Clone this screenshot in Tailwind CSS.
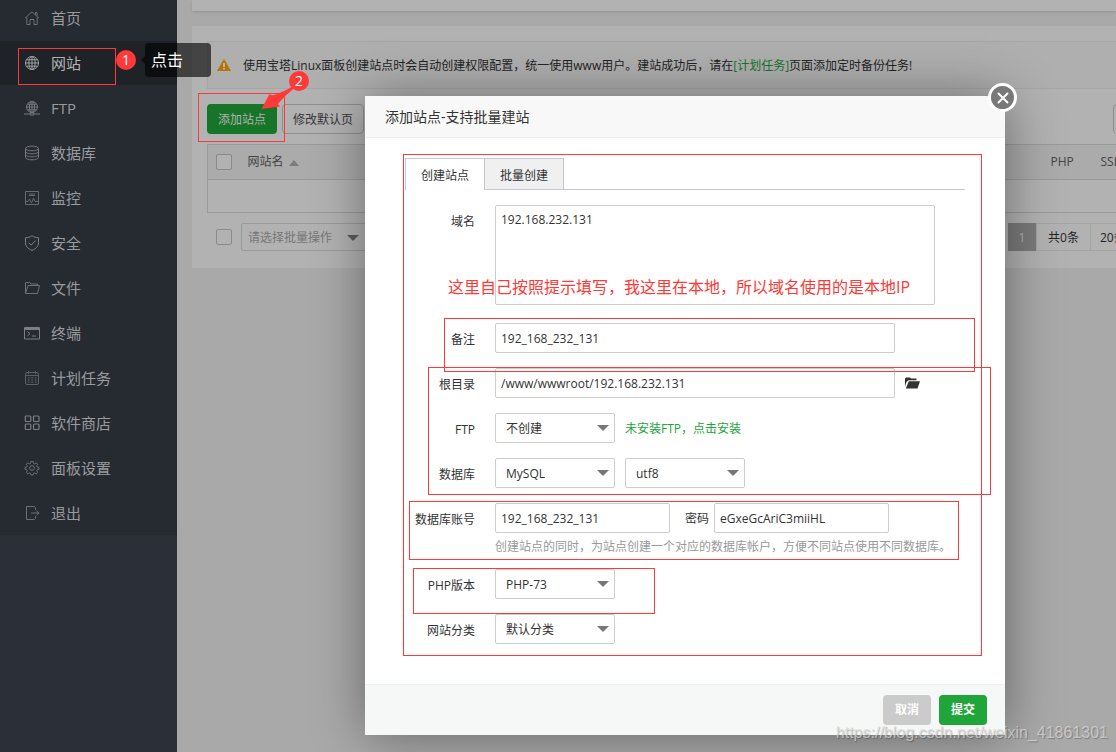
<!DOCTYPE html>
<html lang="zh-CN">
<head>
<meta charset="utf-8">
<meta name="viewport" content="width=device-width, initial-scale=1">
<title>网站</title>
<script src="https://cdn.jsdelivr.net/npm/@tailwindcss/browser@4"></script>
</head>
<body class="relative flex h-screen overflow-hidden bg-[#a9a9a9] font-['Open_Sans','Noto_Sans_CJK_SC',sans-serif] text-xs leading-5 text-[#232323]">

<!-- Sidebar -->
<nav class="w-[177px] shrink-0 overflow-hidden bg-[#2b2f38] text-[15px] text-[#9a9b9d]">
  <ul class="-mt-1 flex flex-col gap-px bg-[#262a31]">
    <li><a href="#" class="flex h-11 items-center gap-[11px] pl-6">
      <svg class="size-4 text-[#6d7074]" viewBox="0 0 16 16" fill="none" stroke="currentColor"><path d="M1 8.2 8 1.8l7 6.4M2.800 7.500V14.500h3.200V9.500h4v5h3.200V7.500M11.500 4.500V2.500h1.500v3.500"/></svg>首页</a></li>
    <li><a href="#" class="flex h-11 items-center gap-[11px] bg-[#1f2226] pl-6 text-[#b2b2b2]">
      <svg class="size-4 text-[#a0a1a2]" viewBox="0 0 16 16" fill="none" stroke="currentColor"><circle cx="8" cy="8" r="6.500"/><ellipse cx="8" cy="8" rx="3.200" ry="6.500"/><path d="M8 1.500v13M1.500 8h13M2.500 4.800h11M2.500 11.200h11"/></svg>网站</a></li>
    <li><a href="#" class="flex h-11 items-center gap-[11px] pl-6">
      <svg class="size-4 text-[#76797d]" viewBox="0 0 16 16" fill="none" stroke="currentColor"><circle cx="8" cy="7" r="5.500"/><ellipse cx="8" cy="7" rx="2.600" ry="5.500"/><path d="M8 1.500v11M2.500 7h11M3.500 4.300h9M3.500 9.800h9M0 14h5.500M10.500 14H16"/><path d="M6 13h4v2H6z"/></svg>FTP</a></li>
    <li><a href="#" class="flex h-11 items-center gap-[11px] pl-6">
      <svg class="size-4 text-[#76797d]" viewBox="0 0 16 16" fill="none" stroke="currentColor"><ellipse cx="8" cy="3.500" rx="6.500" ry="2.300"/><path d="M1.500 3.500v9c0 1.300 2.900 2.300 6.500 2.300s6.500-1 6.500-2.300v-9M1.500 6.500c0 1.300 2.900 2.300 6.500 2.300s6.500-1 6.500-2.300M1.500 9.500c0 1.300 2.900 2.300 6.500 2.300s6.500-1 6.500-2.300"/></svg>数据库</a></li>
    <li><a href="#" class="flex h-11 items-center gap-[11px] pl-6">
      <svg class="size-4 text-[#676a6f]" viewBox="0 0 16 16" fill="none" stroke="currentColor"><path d="M1.500 1.500h13v13h-13zM5 4h6M5 5.500h6M2 11.500h2l1.500-2.500 2 4 2-5 1.500 3.500h3"/></svg>监控</a></li>
    <li><a href="#" class="flex h-11 items-center gap-[11px] pl-6">
      <svg class="size-4 text-[#7d7f83]" viewBox="0 0 16 16" fill="none" stroke="currentColor"><path d="M8 .8c2 1.300 4 1.800 6.500 1.900v5c0 3.700-2.500 6-6.500 7.700-4-1.700-6.500-4-6.500-7.700v-5C4 2.600 6 2.100 8 .8z"/><path d="m4.800 7.800 2.400 2.300 4.300-4.500"/></svg>安全</a></li>
    <li><a href="#" class="flex h-11 items-center gap-[11px] pl-6">
      <svg class="size-4 text-[#6d7074]" viewBox="0 0 16 16" fill="none" stroke="currentColor"><path d="M1.500 13V2.500h4l1.500 1.500h6.500v1.500M1.500 13.500 4 5.500h11.500l-2 8z"/></svg>文件</a></li>
    <li><a href="#" class="flex h-11 items-center gap-[11px] pl-6">
      <svg class="size-4 text-[#7d7f83]" viewBox="0 0 16 16" fill="none" stroke="currentColor"><path d="M.5 2.500h15v11.500H.5zM1 3.500h14M1 4.500h14M3.500 6.500 6 8.700l-2.500 2.100M8 11h4"/></svg>终端</a></li>
    <li><a href="#" class="flex h-11 items-center gap-[11px] pl-6">
      <svg class="size-4 text-[#5d6065]" viewBox="0 0 16 16" fill="none" stroke="currentColor"><rect x="1.500" y="2.500" width="13" height="12" rx="1.500"/><path d="M4.500 1v3M11.500 1v3M2 5.500h12"/><path stroke-dasharray="2 1.500" d="M3.700 7.800h9M3.700 10h9M3.700 12.200h9"/></svg>计划任务</a></li>
    <li><a href="#" class="flex h-11 items-center gap-[11px] pl-6">
      <svg class="size-4 text-[#7d7f83]" viewBox="0 0 16 16" fill="none" stroke="currentColor" stroke-width="1.200"><rect x="1.300" y="1" width="5.500" height="5.500" rx="1"/><rect x="9.500" y="1" width="5.500" height="5.500" rx="1"/><rect x="1.300" y="9" width="5.500" height="5.500" rx="1"/><rect x="9.500" y="9" width="5.500" height="5.500" rx="1"/></svg>软件商店</a></li>
    <li><a href="#" class="flex h-11 items-center gap-[11px] pl-6">
      <svg class="size-4 text-[#6d7074]" viewBox="0 0 16 16" fill="none" stroke="currentColor"><circle cx="8" cy="8" r="2.300"/><path d="M6.900 1.500h2.200l.4 1.800 1.200.5 1.500-1 1.500 1.500-1 1.500.5 1.200 1.800.4v1.800l-1.800.5-.5 1.200 1 1.500-1.500 1.500-1.500-1-1.200.5-.4 1.600H6.900l-.4-1.600-1.200-.5-1.500 1-1.500-1.500 1-1.500-.5-1.200L1 9.200V7.400L2.800 7l.5-1.200-1-1.500 1.500-1.500 1.500 1 1.200-.5z"/></svg>面板设置</a></li>
    <li><a href="#" class="flex h-11 items-center gap-[11px] pl-6">
      <svg class="size-4 text-[#6d7074]" viewBox="0 0 16 16" fill="none" stroke="currentColor"><path d="M11.500 5V2.500l-1-1h-8V14.500h8l1-1V11M7 8h8M12.500 5.800 15 8l-2.500 2.200"/></svg>退出</a></li>
  </ul>
</nav>

<!-- Page content -->
<main class="flex min-w-0 flex-1 flex-col gap-[15px] overflow-hidden pl-[15px]">
  <div class="h-[11px] bg-[#b2b2b2] shadow-sm"></div>
  <section class="-mr-16 bg-[#b2b2b2] px-[15px] pt-[15px] pb-[17px]">
    <div class="flex h-12 items-center gap-3 border border-[#a6a6a6] bg-[#afafaf] pl-[9px]">
      <svg class="size-[14px]" viewBox="0 0 14 14"><path fill="#b3740b" d="M7 .8 14 13H0z"/><path stroke="#c9c4b8" stroke-width="1.600" d="M7 5v4M7 10v1.600"/></svg>
      <p class="pt-0.5">使用宝塔Linux面板创建站点时会自动创建权限配置，统一使用www用户。建站成功后，请在<a href="#" class="text-[#167530]">[计划任务]</a>页面添加定时备份任务!</p>
    </div>
    <div class="mt-[15px] flex gap-[5px]">
      <button class="h-[30px] w-[70px] rounded-sm bg-[#177529] pt-0.5 text-[#b2b2b2]">添加站点</button>
      <button class="h-[30px] w-[82px] rounded-sm border border-[#8e8e8e] pt-0.5 text-[#383838]">修改默认页</button>
      <input type="text" aria-label="搜索" class="ml-auto h-[30px] w-[52px] rounded-sm border border-[#8e8e8e]">
    </div>
    <table class="mt-[10px] w-full table-fixed border border-[#999] text-left text-[#444]">
      <thead>
        <tr class="h-[35px] border-b border-[#999] bg-[#ababab]">
          <th class="w-[30px] pl-2"><input type="checkbox" aria-label="全选" class="block size-4 appearance-none rounded-xs border border-[#8a8a8a] bg-[#b2b2b2]"></th>
          <th class="pl-[10px] font-normal">网站名 <svg class="ml-0.5 inline h-[6px] w-[10px]" viewBox="0 0 10 6"><path fill="#7c7c7c" d="M5 0l5 6H0z"/></svg></th>
          <th class="w-[50px] pl-[10px] font-normal">PHP</th>
          <th class="w-[74px] pl-[10px] font-normal">SSL证书</th>
        </tr>
      </thead>
      <tbody><tr class="h-[33px]"><td colspan="4"></td></tr></tbody>
    </table>
    <div class="mt-[10px] flex items-center">
      <input type="checkbox" aria-label="选择全部" class="ml-[9px] size-4 appearance-none rounded-xs border border-[#8a8a8a]">
      <div class="relative ml-[9px]">
        <select aria-label="批量操作" class="block h-7 w-[130px] appearance-none rounded-xs border border-[#9a9a9a] px-[6px] pt-0.5 text-[#777]"><option>请选择批量操作</option></select>
        <svg class="pointer-events-none absolute top-3 right-[12px] h-[6px] w-3" viewBox="0 0 12 6"><path fill="#5c5c5c" d="M0 0h12L6 6z"/></svg>
      </div>
      <div class="ml-auto flex h-7 text-[#232323]">
        <span class="flex w-7 items-center justify-center bg-[#7b7b7b] pt-0.5 text-[#b2b2b2]">1</span>
        <span class="flex w-[55px] items-center justify-center border border-[#a3a3a3] pt-0.5">共0条</span>
        <span class="flex w-[74px] items-center border-y border-r border-[#a3a3a3] pt-0.5 pl-[9px]">20条/页</span>
      </div>
    </div>
  </section>
</main>

<!-- Dialog -->
<div role="dialog" aria-labelledby="dlg-title" class="absolute top-[96px] left-[365px] w-[640px] bg-white text-[#333] shadow-[1px_1px_50px_rgba(0,0,0,0.4)]">
  <h2 id="dlg-title" class="flex h-[42px] items-center border-b border-[#eee] bg-[#f8f8f8] pl-5 text-sm">添加站点-支持批量建站</h2>
  <button aria-label="关闭" class="absolute -top-[13px] -right-3 flex size-[29px] items-center justify-center rounded-full border-[3px] border-white bg-[#787878]">
    <svg class="size-3" viewBox="0 0 12 12" fill="none" stroke="#fff" stroke-width="2" stroke-linecap="round"><path d="M1.500 1.500l9 9M10.500 1.500l-9 9"/></svg>
  </button>
  <form class="px-10 pt-5 pb-10">
    <div class="flex h-8 border-b border-[#c8c5d8]">
      <button type="button" class="-mb-px w-20 border border-b-0 border-[#c8c5d8] bg-white pt-0.5">创建站点</button>
      <button type="button" class="-ml-px w-20 border border-b-0 border-[#c8c5d8] bg-[#f0f0f0] pt-1">批量创建</button>
    </div>
    <div class="mt-[15px] flex flex-col gap-[15px]">
      <div class="mb-[3px] flex gap-5">
        <label for="domain" class="mt-[7px] w-[70px] text-right">域名</label>
        <textarea id="domain" class="h-[100px] w-[440px] resize-none rounded-xs border border-[#ccc] px-[5px] py-1">192.168.232.131</textarea>
      </div>
      <div class="flex items-center gap-5">
        <label for="note" class="w-[70px] pt-1 text-right">备注</label>
        <input id="note" type="text" value="192_168_232_131" class="h-[30px] w-[400px] rounded-xs border border-[#ccc] px-[5px]">
      </div>
      <div class="flex items-center gap-5">
        <label for="root" class="w-[70px] pt-1 text-right">根目录</label>
        <div class="flex items-center gap-[10px]">
          <input id="root" type="text" value="/www/wwwroot/192.168.232.131" class="h-[30px] w-[400px] rounded-xs border border-[#ccc] px-[5px]">
          <button type="button" aria-label="选择目录"><svg class="h-3 w-[15px]" viewBox="0 0 15 12" fill="#333"><path d="M0 9.500V1.500L1 .5h4l1 1h5.500v1.800H3.500L1.500 5z"/><path d="M3.800 4.300H15L12.500 11.500H.8z"/></svg></button>
        </div>
      </div>
      <div class="flex items-center gap-5">
        <label for="ftp" class="w-[70px] pt-1 text-right">FTP</label>
        <div class="flex items-center gap-[10px]">
          <div class="relative">
            <select id="ftp" class="block h-[30px] w-[120px] appearance-none rounded-xs border border-[#ccc] pt-0.5 pl-[10px]"><option>不创建</option></select>
            <svg class="pointer-events-none absolute top-3 right-[6px] h-[6px] w-3" viewBox="0 0 12 6"><path fill="#777" d="M0 0h12L6 6z"/></svg>
          </div>
          <a href="#" class="pt-0.5 text-[#20a53a]">未安装FTP，点击安装</a>
        </div>
      </div>
      <div class="flex items-center gap-5">
        <label for="db" class="w-[70px] pt-1 text-right">数据库</label>
        <div class="flex gap-[10px]">
          <div class="relative">
            <select id="db" class="block h-[30px] w-[120px] appearance-none rounded-xs border border-[#ccc] pt-0.5 pl-[10px]"><option>MySQL</option></select>
            <svg class="pointer-events-none absolute top-3 right-[6px] h-[6px] w-3" viewBox="0 0 12 6"><path fill="#777" d="M0 0h12L6 6z"/></svg>
          </div>
          <div class="relative">
            <select aria-label="编码" class="block h-[30px] w-[120px] appearance-none rounded-xs border border-[#ccc] pt-0.5 pl-[10px]"><option>utf8</option></select>
            <svg class="pointer-events-none absolute top-3 right-[6px] h-[6px] w-3" viewBox="0 0 12 6"><path fill="#777" d="M0 0h12L6 6z"/></svg>
          </div>
        </div>
      </div>
      <div class="flex gap-5">
        <label for="dbuser" class="mt-[7px] w-[70px] text-right">数据库账号</label>
        <div>
          <div class="flex items-center">
            <input id="dbuser" type="text" value="192_168_232_131" class="h-[30px] w-[175px] rounded-xs border border-[#ccc] px-[5px]">
            <label for="dbpass" class="mr-[5px] ml-[15px] pt-0.5">密码</label>
            <input id="dbpass" type="text" value="eGxeGcAriC3miiHL" class="h-[30px] w-[175px] rounded-xs border border-[#ccc] px-[5px]">
          </div>
          <p class="mt-[5px] -mb-0.5 leading-[18px] whitespace-nowrap text-[#999]">创建站点的同时，为站点创建一个对应的数据库帐户，方便不同站点使用不同数据库。</p>
        </div>
      </div>
      <div class="flex items-center gap-5">
        <label for="php" class="w-[70px] pt-1 text-right">PHP版本</label>
        <div class="relative">
          <select id="php" class="block h-[30px] w-[120px] appearance-none rounded-xs border border-[#ccc] pt-0.5 pl-[10px]"><option>PHP-73</option></select>
          <svg class="pointer-events-none absolute top-3 right-[6px] h-[6px] w-3" viewBox="0 0 12 6"><path fill="#777" d="M0 0h12L6 6z"/></svg>
        </div>
      </div>
      <div class="flex items-center gap-5">
        <label for="cat" class="w-[70px] pt-1 text-right">网站分类</label>
        <div class="relative">
          <select id="cat" class="block h-[30px] w-[120px] appearance-none rounded-xs border border-[#ccc] pt-0.5 pl-[10px]"><option>默认分类</option></select>
          <svg class="pointer-events-none absolute top-3 right-[6px] h-[6px] w-3" viewBox="0 0 12 6"><path fill="#777" d="M0 0h12L6 6z"/></svg>
        </div>
      </div>
    </div>
  </form>
  <footer class="flex justify-end gap-2 border-t border-[#edf1f2] bg-[#f6f8f8] pt-[10px] pr-[18px] pb-[10px] font-bold text-white">
    <button class="h-[30px] w-12 rounded-sm bg-[#cbcbcb]">取消</button>
    <button class="h-[30px] w-12 rounded-sm bg-[#20a53a]">提交</button>
  </footer>
</div>

<!-- Tutorial annotations -->
<div class="pointer-events-none absolute inset-0 overflow-hidden">
  <div class="absolute top-[48px] left-[18px] h-[37px] w-[98px] border border-[#ff3838]"></div>
  <div class="absolute top-[93px] left-[198px] h-[49px] w-[87px] border border-[#ff3838]"></div>
  <div class="absolute top-[154px] left-[403px] h-[502px] w-[579px] border border-[#ff3838]"></div>
  <div class="absolute top-[318px] left-[444px] h-[54px] w-[531px] border border-[#ff3838]"></div>
  <div class="absolute top-[367px] left-[428px] h-[128px] w-[563px] border border-[#ff3838]"></div>
  <div class="absolute top-[501px] left-[409px] h-[59px] w-[550px] border border-[#ff3838]"></div>
  <div class="absolute top-[568px] left-[413px] h-[46px] w-[242px] border border-[#ff3838]"></div>
  <div class="absolute top-[50px] left-[116px] flex size-5 items-center justify-center rounded-full bg-[#ff3838] text-sm text-white">1</div>
  <div class="absolute top-[43px] left-[141px] flex items-center">
    <svg class="h-2 w-1" viewBox="0 0 4 8"><path fill="#000" fill-opacity=".62" d="M4 0v8L0 4z"/></svg>
    <div class="flex h-[34px] w-[66px] items-center rounded-sm bg-black/62 pl-[6px] text-base text-white">点击</div>
  </div>
  <svg class="absolute top-[84px] left-[260px] h-7 w-10" viewBox="0 0 40 28"><path fill="#ff3838" d="M1.500 25 9.500 10l2.500 1.500Q24 8 33 2l1.500 2Q25 11 18 20l2 2.500z"/></svg>
  <div class="absolute top-[71px] left-[289px] flex size-5 items-center justify-center rounded-full bg-[#ff3838] text-sm text-white">2</div>
  <p class="absolute top-[275px] left-[448px] text-base whitespace-nowrap text-[#ff3838]">这里自己按照提示填写，我这里在本地，所以域名使用的是本地IP</p>
  <p class="absolute right-2 bottom-[7px] font-['Liberation_Sans',sans-serif] text-base whitespace-nowrap text-[#dcdcdc]/70 text-shadow-[1px_1px_1px_rgba(0,0,0,0.25)]">https://blog.csdn.net/weixin_41861301</p>
</div>
</body>
</html>
